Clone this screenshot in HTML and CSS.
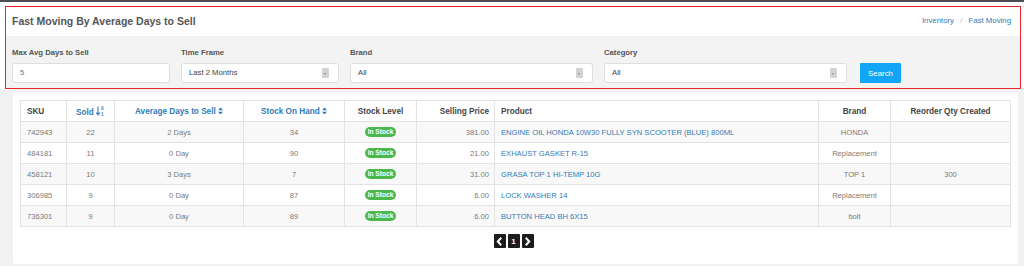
FILE: index.html
```html
<!DOCTYPE html>
<html lang="en">

<head>
    <meta charset="UTF-8">
    <title>Fast Moving By Average Days to Sell</title>
    <link rel="stylesheet" href="styles.css">
</head>

<body>
    <div class="topbar"></div>
    <div class="page-top">
        <div class="panel">
            <div class="panel-head">
                <h3 class="title">Fast Moving By Average Days to Sell</h3>
                <div class="crumbs">
                    <a href="#">Inventory</a>
                    <span class="sep">/</span>
                    <a href="#">Fast Moving</a>
                </div>
            </div>
            <div class="filters">
                <div class="field f-small">
                    <label>Max Avg Days to Sell</label>
                    <div class="input">5</div>
                </div>
                <div class="field f-small">
                    <label>Time Frame</label>
                    <div class="input select dark">Last 2 Months<span class="arrow"></span></div>
                </div>
                <div class="field f-wide">
                    <label>Brand</label>
                    <div class="input select dark">All<span class="arrow"></span></div>
                </div>
                <div class="field f-wide">
                    <label>Category</label>
                    <div class="input select dark">All<span class="arrow"></span></div>
                </div>
                <div class="field f-btn">
                    <button class="btn-search">Search</button>
                </div>
            </div>
        </div>
    </div>

    <div class="content">
        <div class="card">
            <table class="grid">
                <colgroup>
                    <col class="c-sku">
                    <col class="c-sold">
                    <col class="c-avg">
                    <col class="c-soh">
                    <col class="c-level">
                    <col class="c-price">
                    <col class="c-product">
                    <col class="c-brand">
                    <col class="c-reorder">
                </colgroup>
                <thead>
                    <tr>
                        <th class="left">SKU</th>
                        <th class="link">Sold
                            <svg class="ico-num" width="9" height="10" viewBox="0 0 9 10">
                                <path d="M2 0.5 V8.5 M0.3 6.6 L2 8.8 L3.7 6.6" stroke="#337ab7" stroke-width="1.1" fill="none"/>
                                <text x="5" y="4" font-size="4.5" fill="#337ab7" font-family="Liberation Sans">9</text>
                                <text x="5" y="9.5" font-size="4.5" fill="#337ab7" font-family="Liberation Sans">1</text>
                            </svg>
                        </th>
                        <th class="link">Average Days to Sell <svg class="ico-sort" width="5" height="8" viewBox="0 0 6 9"><path d="M0 3.7 L3 0.3 L6 3.7 Z M0 5.3 L3 8.7 L6 5.3 Z" fill="#337ab7"/></svg></th>
                        <th class="link">Stock On Hand <svg class="ico-sort" width="5" height="8" viewBox="0 0 6 9"><path d="M0 3.7 L3 0.3 L6 3.7 Z M0 5.3 L3 8.7 L6 5.3 Z" fill="#337ab7"/></svg></th>
                        <th>Stock Level</th>
                        <th class="right">Selling Price</th>
                        <th class="left">Product</th>
                        <th>Brand</th>
                        <th>Reorder Qty Created</th>
                    </tr>
                </thead>
                <tbody>
                    <tr>
                        <td class="left">742943</td>
                        <td>22</td>
                        <td>2 Days</td>
                        <td>34</td>
                        <td><span class="badge">In Stock</span></td>
                        <td class="right">381.00</td>
                        <td class="left"><a href="#">ENGINE OIL HONDA 10W30 FULLY SYN SCOOTER (BLUE) 800ML</a></td>
                        <td>HONDA</td>
                        <td></td>
                    </tr>
                    <tr>
                        <td class="left">484181</td>
                        <td>11</td>
                        <td>0 Day</td>
                        <td>90</td>
                        <td><span class="badge">In Stock</span></td>
                        <td class="right">21.00</td>
                        <td class="left"><a href="#">EXHAUST GASKET R-15</a></td>
                        <td>Replacement</td>
                        <td></td>
                    </tr>
                    <tr>
                        <td class="left">458121</td>
                        <td>10</td>
                        <td>3 Days</td>
                        <td>7</td>
                        <td><span class="badge">In Stock</span></td>
                        <td class="right">31.00</td>
                        <td class="left"><a href="#">GRASA TOP 1 HI-TEMP 10G</a></td>
                        <td>TOP 1</td>
                        <td>300</td>
                    </tr>
                    <tr>
                        <td class="left">306985</td>
                        <td>9</td>
                        <td>0 Day</td>
                        <td>87</td>
                        <td><span class="badge">In Stock</span></td>
                        <td class="right">6.00</td>
                        <td class="left"><a href="#">LOCK WASHER 14</a></td>
                        <td>Replacement</td>
                        <td></td>
                    </tr>
                    <tr>
                        <td class="left">736301</td>
                        <td>9</td>
                        <td>0 Day</td>
                        <td>89</td>
                        <td><span class="badge">In Stock</span></td>
                        <td class="right">6.00</td>
                        <td class="left"><a href="#">BUTTON HEAD BH 6X15</a></td>
                        <td>bolt</td>
                        <td></td>
                    </tr>
                </tbody>
            </table>

            <div class="pager">
                <a href="#" class="pg"><svg width="7" height="9" viewBox="0 0 7 9"><path d="M5.2 0.8 L1.8 4.5 L5.2 8.2" stroke="#fff" stroke-width="2" fill="none"/></svg></a>
                <a href="#" class="pg num">1</a>
                <a href="#" class="pg"><svg width="7" height="9" viewBox="0 0 7 9"><path d="M1.8 0.8 L5.2 4.5 L1.8 8.2" stroke="#fff" stroke-width="2" fill="none"/></svg></a>
            </div>
        </div>
    </div>
</body>

</html>
```

FILE: styles.css
```css
/* page base */
body {
    margin: 0;
    font-family: "Liberation Sans", Arial, sans-serif;
    color: #555;
    background-color: #f1f1f1;
}

a {
    color: #337ab7;
    text-decoration: none;
}

.topbar {
    height: 2px;
    background-color: #4b4d52;
}

.page-top {
    background-color: #fff;
    padding: 4px 3px 0 5px;
}

.panel {
    border: 1px solid #e8262b;
}

.panel-head {
    display: flex;
    justify-content: space-between;
    align-items: center;
    height: 29px;
    box-sizing: border-box;
    padding: 0 9px 2px 6px;
    background-color: #fff;
}

.title {
    margin: 0;
    font-size: 10.5px;
    font-weight: bold;
    color: #555;
}

.crumbs {
    font-size: 7.8px;
}

.crumbs .sep {
    color: #bbb;
    margin: 0 4px;
}

/* filter row */
.filters {
    display: flex;
    align-items: flex-end;
    gap: 11px;
    height: 52px;
    padding: 0 6px 5px 6px;
    box-sizing: border-box;
    background-color: #f3f3f3;
}

.field label {
    display: block;
    font-size: 7.7px;
    font-weight: bold;
    color: #555;
    margin-bottom: 6px;
}

.f-small {
    width: 158px;
}

.f-wide {
    width: 243px;
}

.input {
    position: relative;
    height: 20px;
    line-height: 18px;
    box-sizing: border-box;
    padding: 0 7px;
    border: 1px solid #dedede;
    border-radius: 3px;
    background-color: #fff;
    font-size: 7.7px;
    color: #777;
}

.input.dark {
    color: #444;
}

.select .arrow {
    position: absolute;
    right: 9px;
    top: 4px;
    width: 7px;
    height: 10px;
    background-color: #d2d2d2;
    border-radius: 1px;
}

.select .arrow::after {
    content: "";
    position: absolute;
    left: 2px;
    top: 5px;
    border-left: 1.5px solid transparent;
    border-right: 1.5px solid transparent;
    border-top: 2px solid #888;
}

.f-btn {
    margin-left: 2px;
}

.btn-search {
    height: 20px;
    width: 41px;
    padding: 0;
    border: none;
    border-radius: 1px;
    background-color: #10a5f5;
    color: #fff;
    font-family: inherit;
    font-size: 7.9px;
    cursor: pointer;
}

/* results */
.content {
    padding: 3px 6px 4px 13px;
}

.card {
    background-color: #fff;
    border-radius: 2px;
    padding: 8px 7px 16px 7px;
}

.grid {
    width: 990px;
    table-layout: fixed;
    border-collapse: collapse;
    font-size: 7.6px;
}

.c-sku { width: 46px; }
.c-sold { width: 48px; }
.c-avg { width: 129px; }
.c-soh { width: 101px; }
.c-level { width: 72px; }
.c-price { width: 78px; }
.c-product { width: 324px; }
.c-brand { width: 72px; }
.c-reorder { width: 120px; }

.grid th,
.grid td {
    border: 1px solid #e3e3e3;
    height: 20px;
    padding: 0 6px;
    text-align: center;
    white-space: nowrap;
    overflow: hidden;
}

.grid th {
    font-size: 8.2px;
    font-weight: bold;
    color: #444;
    background-color: #fff;
}

.grid td {
    color: #7a7a7a;
}

.grid th.link {
    color: #337ab7;
}

.grid .left {
    text-align: left;
}

.grid .right {
    text-align: right;
    padding-right: 5px;
}

.grid tbody tr:nth-child(odd) td {
    background-color: #f8f8f8;
}

.ico-sort,
.ico-num {
    vertical-align: -1px;
}

.badge {
    display: inline-block;
    padding: 0 3px;
    height: 10px;
    line-height: 10px;
    border-radius: 5px;
    background-color: #4cb84c;
    color: #fff;
    font-size: 6.6px;
    font-weight: bold;
}

.pager {
    display: flex;
    justify-content: center;
    gap: 2px;
    margin-top: 7px;
    padding-right: 4px;
}

.pg {
    display: flex;
    align-items: center;
    justify-content: center;
    width: 12px;
    height: 14px;
    background-color: #1c1c1c;
    border-radius: 1px;
    color: #fff;
    font-size: 8px;
    font-weight: bold;
}
```
